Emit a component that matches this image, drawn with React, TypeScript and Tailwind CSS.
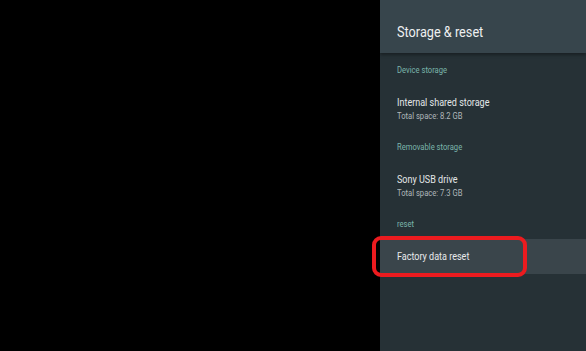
const squeeze = 'inline-block origin-left scale-x-[0.82] whitespace-nowrap'

function SectionLabel({ children }: { children: string }) {
  return (
    <div className="h-[10px] text-[9.3px] leading-[10px] text-[#7bb5ab]">
      <span className={squeeze}>{children}</span>
    </div>
  )
}

function StorageItem({ title, detail }: { title: string; detail: string }) {
  return (
    <div className="flex flex-col py-[21px]">
      <div className="h-[13px] text-[11px] leading-[13px] text-[#e4e7e8]">
        <span className={squeeze}>{title}</span>
      </div>
      <div className="mt-[2px] h-[10px] text-[9.3px] leading-[10px] text-[#b0b7ba]">
        <span className={squeeze}>{detail}</span>
      </div>
    </div>
  )
}

export default function App() {
  return (
    <div
      className="flex h-[351px] w-[586px] overflow-hidden bg-black"
      style={{ fontFamily: 'Roboto, "Noto Sans", sans-serif' }}
    >
      <div className="flex-1 bg-black" />

      <div className="flex w-[206px] flex-col bg-[#263136]">
        {/* Header */}
        <div className="relative h-[53px] bg-[#37454c] pl-[17px] pt-[23px] shadow-[0_2px_3px_rgba(0,0,0,0.35)]">
          <div className="h-[18px] text-[15.5px] leading-[18px] text-[#eef0f1]">
            <span className={squeeze}>Storage &amp; reset</span>
          </div>
        </div>

        {/* Body */}
        <div className="flex flex-col pt-[12px]">
          <div className="pl-[17px]">
            <SectionLabel>Device storage</SectionLabel>
            <StorageItem title="Internal shared storage" detail="Total space: 8.2 GB" />
            <SectionLabel>Removable storage</SectionLabel>
            <StorageItem title="Sony USB drive" detail="Total space: 7.3 GB" />
            <SectionLabel>reset</SectionLabel>
          </div>

          <div className="relative mt-[10px] flex h-[35px] items-center bg-[#3a454b] pl-[17px]">
            <div className="h-[13px] text-[11px] leading-[13px] text-[#e8eaeb]">
              <span className={squeeze}>Factory data reset</span>
            </div>
            <div className="absolute left-[-8px] top-[-3px] h-[41px] w-[155px] rounded-[9px] border-[4px] border-[#ec1b1f]" />
          </div>
        </div>
      </div>
    </div>
  )
}
